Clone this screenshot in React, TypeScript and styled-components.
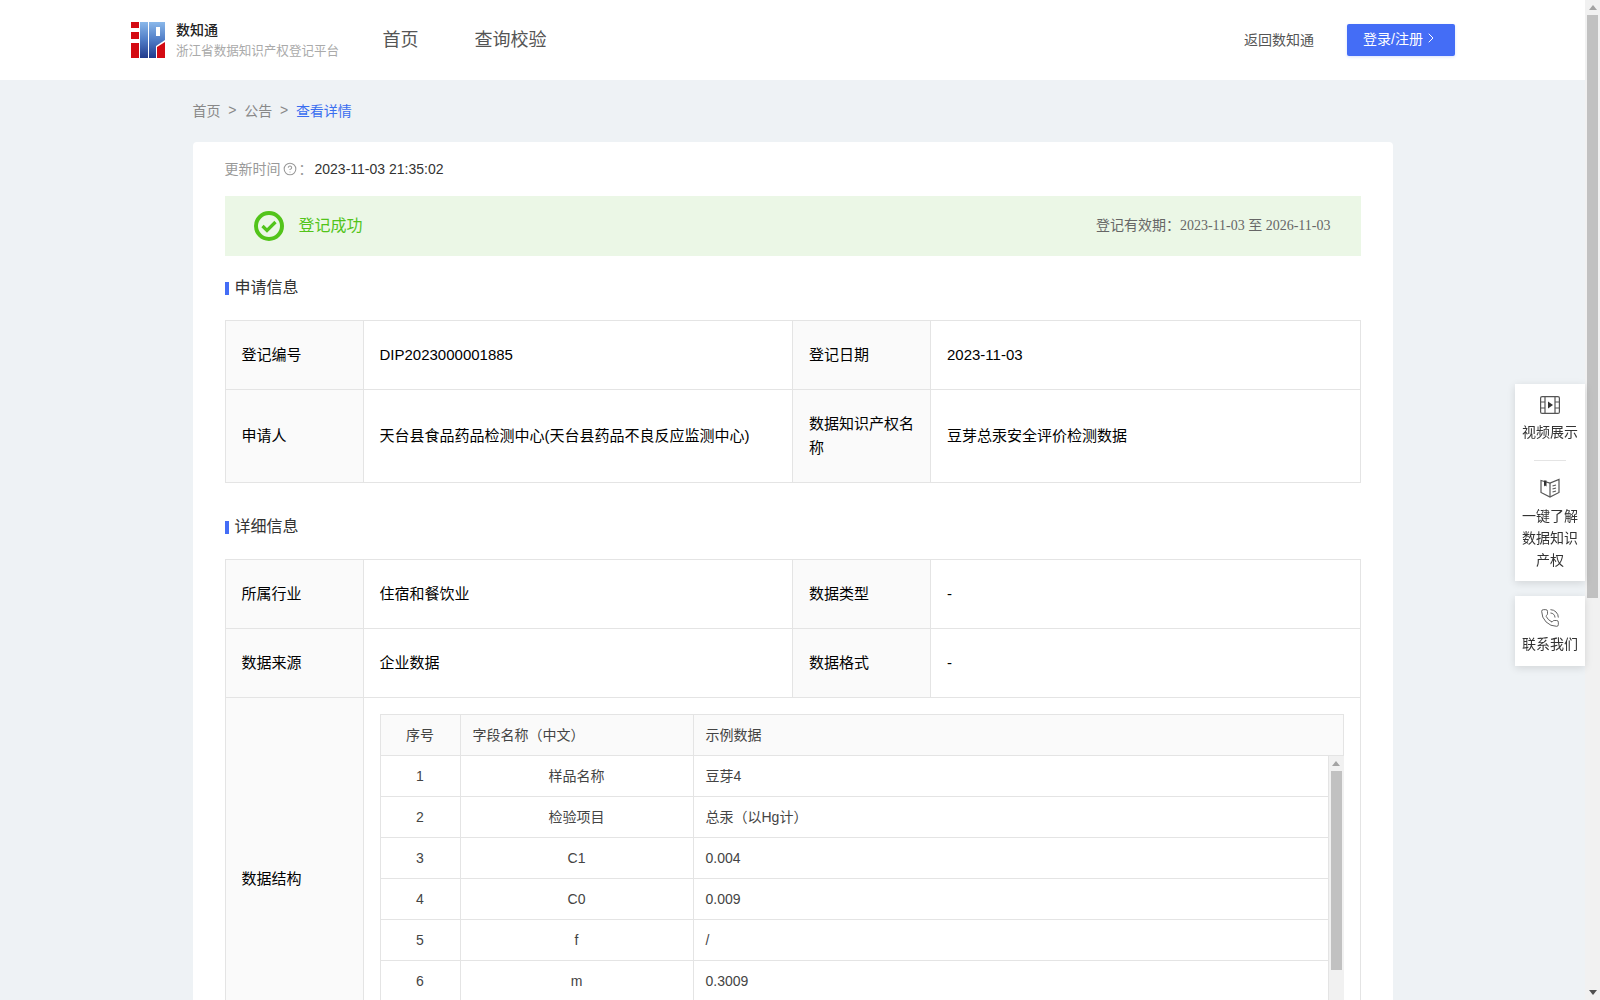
import React from 'react';
import styled, { createGlobalStyle } from 'styled-components';
import { ChevronRight, CircleHelp, PhoneCall } from 'lucide-react';

const FONT = '"Liberation Sans", "Noto Sans CJK SC", sans-serif';

const GlobalStyle = createGlobalStyle`
  body {
    margin: 0;
    background: #eef2f5;
    color: #333;
    font-family: ${FONT};
    font-size: 14px;
  }
  * { box-sizing: border-box; }
`;

const Shell = styled.div`
  display: flex;
  height: 100vh;
  overflow: hidden;
`;

const Page = styled.div`
  flex: 1;
  min-width: 0;
  overflow: hidden;
`;

const ScrollTrack = styled.div<{ $divider?: boolean }>`
  flex: none;
  width: ${(p) => (p.$divider ? 16 : 15)}px;
  display: flex;
  flex-direction: column;
  background: #f1f1f1;
  border-left: ${(p) => (p.$divider ? '1px solid #e4e4e4' : '0')};
`;

const ScrollArrowBox = styled.div`
  flex: none;
  height: 15px;
  display: flex;
  align-items: center;
  justify-content: center;
`;

const ScrollArrow = styled.div<{ $down?: boolean }>`
  width: 0;
  height: 0;
  border-left: 4px solid transparent;
  border-right: 4px solid transparent;
  border-bottom: ${(p) => (p.$down ? '0' : '5px solid #a3a3a3')};
  border-top: ${(p) => (p.$down ? '5px solid #505050' : '0')};
`;

const ScrollThumb = styled.div<{ $size: number }>`
  flex: none;
  height: ${(p) => p.$size}px;
  margin: 0 2px;
  background: #c1c1c1;
`;

const ScrollSpace = styled.div`
  flex: 1;
`;

const Header = styled.header`
  height: 80px;
  padding: 0 130px 0 131px;
  display: flex;
  align-items: center;
  background: #fff;
`;

const Brand = styled.div`
  display: flex;
  align-items: center;
  gap: 11px;
`;

const BrandText = styled.div`
  display: flex;
  flex-direction: column;
  gap: 3px;
  margin-top: -2px;
`;

const BrandName = styled.div`
  font-size: 14px;
  line-height: 20px;
  font-weight: 500;
  color: #222;
`;

const BrandSub = styled.div`
  font-size: 12.55px;
  line-height: 16px;
  color: #aaa;
`;

const Nav = styled.nav`
  display: flex;
  gap: 56px;
  margin: -5px 0 0 43.5px;
  flex: 1;
`;

const NavLink = styled.a`
  font-size: 18px;
  color: #555;
`;

const BackLink = styled.a`
  margin: -3px 33px 0 0;
  font-size: 14px;
  color: #555;
`;

const LoginButton = styled.button`
  width: 108px;
  height: 32px;
  padding: 0 0 5px;
  border: 0;
  border-radius: 2px;
  display: flex;
  align-items: center;
  justify-content: center;
  gap: 0;
  background: #446df6;
  box-shadow: 0 1px 3px rgba(68, 109, 246, 0.2);
  color: #fff;
  font-family: ${FONT};
  font-size: 14px;
`;

const Container = styled.main`
  width: 1200px;
  margin: 0 auto;
`;

const Breadcrumb = styled.div`
  height: 62px;
  padding-bottom: 3px;
  display: flex;
  align-items: center;
  font-size: 14px;
  color: #888;
`;

const Separator = styled.span`
  margin: 0 7.75px;
`;

const Current = styled.span`
  color: #3a6ef0;
`;

const Card = styled.section`
  padding: 16px 32px 32px;
  background: #fff;
  border-radius: 4px;
`;

const UpdateRow = styled.div`
  height: 22px;
  display: flex;
  align-items: center;
  margin-bottom: 16px;
  font-size: 14px;
`;

const UpdateLabel = styled.span`
  display: flex;
  align-items: center;
  gap: 2px;
  margin-top: -2px;
  color: #999;

  svg {
    margin-top: 2px;
  }
`;

const UpdateValue = styled.span`
  margin-left: 2px;
  color: #333;
`;

const StatusBanner = styled.div`
  height: 60px;
  padding: 0 30px 0 29px;
  display: flex;
  align-items: center;
  background: #ebf7e6;
`;

const StatusText = styled.span`
  flex: 1;
  margin: -5px 0 0 15px;
  font-size: 16px;
  color: #52c41a;
`;

const Validity = styled.span`
  margin-top: -5px;
  font-size: 14px;
  color: #666;
`;

const ValidityDate = styled.span`
  font-family: "Liberation Serif", "Noto Sans CJK SC", serif;
`;

const SectionTitle = styled.h3<{ $top: number }>`
  display: flex;
  align-items: center;
  gap: 6px;
  height: 24px;
  margin: ${(p) => p.$top}px 0 21px;
  padding-bottom: 2px;
  font-size: 16px;
  font-weight: 400;
  color: #333;

  &::before {
    content: '';
    width: 4px;
    height: 13px;
    margin-top: 4px;
    background: #446df6;
  }
`;

const InfoTable = styled.table`
  width: 1136px;
  table-layout: fixed;
  border-collapse: collapse;
  font-size: 15px;
  line-height: 24px;
  color: #000;
`;

const LabelCell = styled.th`
  width: 138px;
  padding: 22px 16px;
  border: 1px solid #e4e4e4;
  background: #fafafa;
  font-weight: 400;
  text-align: left;
`;

const ValueCell = styled.td`
  padding: 22px 16px;
  border: 1px solid #e4e4e4;
`;

const StructureCell = styled.td`
  padding: 16px;
  border: 1px solid #e4e4e4;
`;

const FieldTable = styled.div`
  border: 1px solid #e4e4e4;
  border-bottom: 0;
  font-size: 14px;
  color: #444;
`;

const FieldRow = styled.div`
  display: grid;
  grid-template-columns: 79px 233px 1fr;
  height: 41px;
  border-bottom: 1px solid #e4e4e4;
`;

const FieldHead = styled(FieldRow)`
  background: #fafafa;
`;

const FieldCell = styled.div<{ $center?: boolean }>`
  display: flex;
  align-items: center;
  justify-content: ${(p) => (p.$center ? 'center' : 'flex-start')};
  padding: 0 12px;
  border-left: 1px solid #e4e4e4;

  &:first-child {
    border-left: 0;
  }
`;

const FieldBody = styled.div`
  display: flex;
  height: 287px;
  margin-right: -1px;
`;

const FieldRows = styled.div`
  flex: 1;
  min-width: 0;
  overflow: hidden;
`;

const SideRail = styled.aside`
  position: fixed;
  top: 384px;
  right: 15px;
  width: 70px;
  display: flex;
  flex-direction: column;
  gap: 15px;
`;

const SidePanel = styled.div`
  min-height: 70px;
  padding: 12px 0 10px;
  background: #fff;
  box-shadow: 0 2px 8px rgba(0, 0, 0, 0.12);
`;

const SideItem = styled.a<{ $gap: number }>`
  display: flex;
  flex-direction: column;
  align-items: center;
  gap: ${(p) => p.$gap}px;
  padding: 0 5px;
  font-size: 14px;
  line-height: 22px;
  color: #333;
  text-align: center;
`;

const SideDivider = styled.div`
  width: 32px;
  height: 1px;
  margin: 17px auto;
  background: #e4e4e4;
`;

const FIELDS = [
  ['1', '样品名称', '豆芽4'],
  ['2', '检验项目', '总汞（以Hg计）'],
  ['3', 'C1', '0.004'],
  ['4', 'C0', '0.009'],
  ['5', 'f', '/'],
  ['6', 'm', '0.3009'],
  ['7', 'M', '/'],
  ['8', 'n', '/'],
  ['9', 'c', '/'],
];

const Logo = () => (
  <svg width="34" height="36" viewBox="0 0 34 36">
    <defs>
      <linearGradient id="logoBlue" x1="0" y1="0" x2="0" y2="1">
        <stop offset="0" stopColor="#8ab8ea" />
        <stop offset="0.5" stopColor="#4f7cc6" />
        <stop offset="1" stopColor="#203a8c" />
      </linearGradient>
    </defs>
    <path d="M0 0h8v6H0zM0 10h8v7H0zM0 21h8v15H0z" fill="#d40a12" />
    <path d="M9 0h8v36H9zM18 0h16v18l-9 6v12h-7z" fill="url(#logoBlue)" />
    <path d="M25 5h4v9h-4z" fill="#fff" />
    <path d="M26 36V25l8-5v16z" fill="#d40a12" />
  </svg>
);

const CheckBadge = () => (
  <svg width="30" height="30" viewBox="0 0 30 30">
    <circle cx="15" cy="15" r="13" fill="none" stroke="#52c41a" strokeWidth="4" />
    <path d="M8.5 15l4.5 4.5L21.5 11" fill="none" stroke="#52c41a" strokeWidth="3.2" />
  </svg>
);

const VideoIcon = () => (
  <svg width="20" height="18" viewBox="0 0 20 18" fill="none" stroke="#555" strokeWidth="1.2">
    <rect x="0.6" y="0.6" width="18.8" height="16.8" rx="1.5" />
    <path d="M5 1v16M15 1v16M1 6h4M1 12h4M15 6h4M15 12h4" />
    <path d="M8 5.5l5 3.5-5 3.5z" fill="#333" stroke="none" />
  </svg>
);

const BookIcon = () => (
  <svg width="20" height="20" viewBox="0 0 20 20" fill="none" stroke="#555" strokeWidth="1.2">
    <path d="M1 2.5l9 2.5 9-3.5v13L10 19 1 14.5z" />
    <path d="M10 5v14M12.5 8l3.5-1M12.5 11l3.5-1M12.5 14l3.5-1" />
    <path d="M4 2.5h2.5v6L5 7.5 4 8.5z" fill="#333" stroke="none" />
  </svg>
);

const App: React.FC = () => (
  <Shell>
    <GlobalStyle />
    <Page>
      <Header>
        <Brand>
          <Logo />
          <BrandText>
            <BrandName>数知通</BrandName>
            <BrandSub>浙江省数据知识产权登记平台</BrandSub>
          </BrandText>
        </Brand>
        <Nav>
          <NavLink>首页</NavLink>
          <NavLink>查询校验</NavLink>
        </Nav>
        <BackLink>返回数知通</BackLink>
        <LoginButton>
          登录/注册
          <ChevronRight size={16} strokeWidth={1.5} />
        </LoginButton>
      </Header>
      <Container>
        <Breadcrumb>
          首页
          <Separator>&gt;</Separator>
          公告
          <Separator>&gt;</Separator>
          <Current>查看详情</Current>
        </Breadcrumb>
        <Card>
          <UpdateRow>
            <UpdateLabel>
              更新时间
              <CircleHelp size={14} strokeWidth={1.8} />
              ：
            </UpdateLabel>
            <UpdateValue>2023-11-03 21:35:02</UpdateValue>
          </UpdateRow>
          <StatusBanner>
            <CheckBadge />
            <StatusText>登记成功</StatusText>
            <Validity>
              登记有效期：
              <ValidityDate>2023-11-03 至 2026-11-03</ValidityDate>
            </Validity>
          </StatusBanner>

          <SectionTitle $top={19}>申请信息</SectionTitle>
          <InfoTable>
            <tbody>
              <tr>
                <LabelCell>登记编号</LabelCell>
                <ValueCell>DIP2023000001885</ValueCell>
                <LabelCell>登记日期</LabelCell>
                <ValueCell>2023-11-03</ValueCell>
              </tr>
              <tr>
                <LabelCell>申请人</LabelCell>
                <ValueCell>天台县食品药品检测中心(天台县药品不良反应监测中心)</ValueCell>
                <LabelCell>数据知识产权名称</LabelCell>
                <ValueCell>豆芽总汞安全评价检测数据</ValueCell>
              </tr>
            </tbody>
          </InfoTable>

          <SectionTitle $top={31}>详细信息</SectionTitle>
          <InfoTable>
            <tbody>
              <tr>
                <LabelCell>所属行业</LabelCell>
                <ValueCell>住宿和餐饮业</ValueCell>
                <LabelCell>数据类型</LabelCell>
                <ValueCell>-</ValueCell>
              </tr>
              <tr>
                <LabelCell>数据来源</LabelCell>
                <ValueCell>企业数据</ValueCell>
                <LabelCell>数据格式</LabelCell>
                <ValueCell>-</ValueCell>
              </tr>
              <tr>
                <LabelCell>数据结构</LabelCell>
                <StructureCell colSpan={3}>
                  <FieldTable>
                    <FieldHead>
                      <FieldCell $center>序号</FieldCell>
                      <FieldCell>字段名称（中文）</FieldCell>
                      <FieldCell>示例数据</FieldCell>
                    </FieldHead>
                    <FieldBody>
                      <FieldRows>
                        {FIELDS.map(([no, name, sample]) => (
                          <FieldRow key={no}>
                            <FieldCell $center>{no}</FieldCell>
                            <FieldCell $center>{name}</FieldCell>
                            <FieldCell>{sample}</FieldCell>
                          </FieldRow>
                        ))}
                      </FieldRows>
                      <ScrollTrack $divider>
                        <ScrollArrowBox><ScrollArrow /></ScrollArrowBox>
                        <ScrollThumb $size={199} />
                      </ScrollTrack>
                    </FieldBody>
                  </FieldTable>
                </StructureCell>
              </tr>
            </tbody>
          </InfoTable>
        </Card>
      </Container>
    </Page>
    <ScrollTrack>
      <ScrollArrowBox><ScrollArrow /></ScrollArrowBox>
      <ScrollThumb $size={583} />
      <ScrollSpace />
      <ScrollArrowBox><ScrollArrow $down /></ScrollArrowBox>
    </ScrollTrack>
    <SideRail>
      <SidePanel>
        <SideItem $gap={7}>
          <VideoIcon />
          视频展示
        </SideItem>
        <SideDivider />
        <SideItem $gap={7}>
          <BookIcon />
          一键了解数据知识产权
        </SideItem>
      </SidePanel>
      <SidePanel>
        <SideItem $gap={5}>
          <PhoneCall size={20} strokeWidth={1.1} color="#555" />
          联系我们
        </SideItem>
      </SidePanel>
    </SideRail>
  </Shell>
);

export default App;
